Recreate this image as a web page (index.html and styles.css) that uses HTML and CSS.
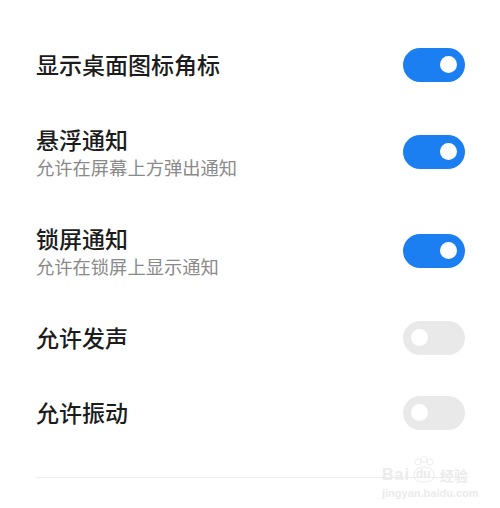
FILE: index.html
```html
<!DOCTYPE html>
<html lang="zh-CN">
<head>
    <meta charset="UTF-8">
    <meta name="viewport" content="width=device-width, initial-scale=1.0">
    <title>通知设置</title>
    <link rel="stylesheet" href="styles.css">
</head>
<body>

    <div class="settings">
        <div class="row">
            <div class="label">
                <div class="title">显示桌面图标角标</div>
            </div>
            <div class="switch on"><span class="knob"></span></div>
        </div>

        <div class="row">
            <div class="label">
                <div class="title">悬浮通知</div>
                <div class="desc">允许在屏幕上方弹出通知</div>
            </div>
            <div class="switch on"><span class="knob"></span></div>
        </div>

        <div class="row">
            <div class="label">
                <div class="title">锁屏通知</div>
                <div class="desc">允许在锁屏上显示通知</div>
            </div>
            <div class="switch on"><span class="knob"></span></div>
        </div>

        <div class="row">
            <div class="label">
                <div class="title">允许发声</div>
            </div>
            <div class="switch"><span class="knob"></span></div>
        </div>

        <div class="row">
            <div class="label">
                <div class="title">允许振动</div>
            </div>
            <div class="switch"><span class="knob"></span></div>
        </div>

        <div class="divider"></div>
    </div>

    <!-- watermark -->
    <div class="watermark">
        <div class="wm-logo">
            <span class="wm-bai">Bai</span>
            <span class="wm-paw">
                <svg width="28" height="28" viewBox="0 0 28 28">
                    <circle cx="8" cy="6" r="3" fill="none" stroke="#ececec" stroke-width="1"/>
                    <circle cx="14" cy="3.5" r="3" fill="none" stroke="#ececec" stroke-width="1"/>
                    <circle cx="20" cy="6" r="3" fill="none" stroke="#ececec" stroke-width="1"/>
                    <path d="M4 20 C4 13 9 11 14 11 C19 11 24 13 24 20 C24 25 19 26 14 26 C9 26 4 25 4 20 Z" fill="none" stroke="#ececec" stroke-width="1"/>
                </svg>
                <span class="wm-du">du</span>
            </span>
            <span class="wm-jy">经验</span>
        </div>
        <div class="wm-url">jingyan.baidu.com</div>
    </div>

</body>
</html>
```

FILE: styles.css
```css
body {
    margin: 0;
    background: #ffffff;
    font-family: "Noto Sans CJK SC", "Noto Sans", sans-serif;
    position: relative;
    height: 508px;
    overflow: hidden;
}

.settings {
    padding: 27px 35px 0 36px;
}

.row {
    display: flex;
    align-items: center;
    justify-content: space-between;
}

.label {
    padding: 22px 0;
}

.title {
    font-size: 23px;
    line-height: 31px;
    font-weight: 500;
    color: #1c1c1c;
}

.desc {
    font-size: 18.3px;
    line-height: 24px;
    color: #8a8a8a;
}

.switch {
    width: 62px;
    height: 34px;
    border-radius: 17px;
    background: #e9e9e9;
    display: flex;
    align-items: center;
    padding: 0 8px;
    box-sizing: border-box;
}

.switch.on {
    background: #1b7ff2;
    justify-content: flex-end;
}

.knob {
    width: 17px;
    height: 17px;
    border-radius: 50%;
    background: #ffffff;
}

.divider {
    height: 1px;
    background: #eeeeee;
    margin-top: 27px;
}

.watermark {
    position: absolute;
    left: 382px;
    top: 452px;
    color: #ebebeb;
    font-family: "Liberation Sans", Arial, sans-serif;
}

.wm-logo {
    display: flex;
    align-items: flex-end;
    height: 32px;
}

.wm-bai {
    font-size: 16px;
    font-weight: bold;
    line-height: 18px;
    letter-spacing: 1px;
}

.wm-paw {
    position: relative;
    width: 28px;
    height: 28px;
    display: inline-block;
}

.wm-paw svg {
    display: block;
}

.wm-du {
    position: absolute;
    left: 6px;
    top: 11px;
    font-size: 12px;
    font-weight: bold;
}

.wm-jy {
    font-family: "Noto Sans CJK SC", sans-serif;
    font-size: 14px;
    line-height: 18px;
    font-weight: bold;
    margin-left: 2px;
}

.wm-url {
    font-size: 11px;
    font-weight: bold;
    margin-top: 3px;
}
```
